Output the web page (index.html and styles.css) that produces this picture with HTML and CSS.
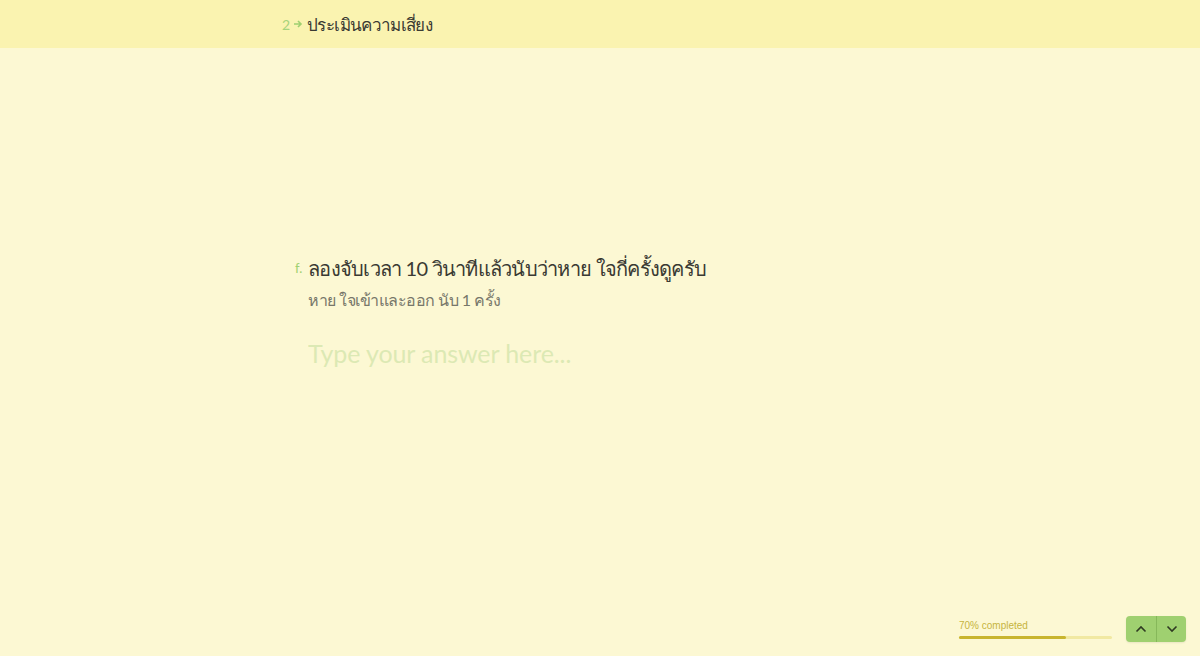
FILE: index.html
```html
<!DOCTYPE html>
<html>
<head>
    <title>ประเมินความเสี่ยง</title>
    <link rel="stylesheet" href="styles.css">
</head>
<body>
    <div class="header">
        <div class="header-inner">
            <span class="section-num">2</span>
            <span class="section-arrow">
                <svg width="10" height="10" viewBox="0 0 10 10">
                    <path d="M1 5 H8 M5 2 L8 5 L5 8" fill="none" stroke="#9fd070" stroke-width="1.6"/>
                </svg>
            </span>
            <span class="section-title">ประเมินความเสี่ยง</span>
        </div>
    </div>

    <div class="main">
        <div class="question">
            <div class="question-num">f.</div>
            <div class="question-body">
                <div class="question-title">ลองจับเวลา 10 วินาทีแล้วนับว่าหาย ใจกี่ครั้งดูครับ</div>
                <div class="question-desc">หาย ใจเข้าและออก นับ 1 ครั้ง</div>
                <input class="answer" type="text" placeholder="Type your answer here...">
            </div>
        </div>
    </div>

    <div class="footer">
        <div class="progress">
            <div class="progress-label">70% completed</div>
            <div class="progress-track">
                <div class="progress-fill" style="width: 70%"></div>
            </div>
        </div>
        <div class="nav-buttons">
            <button class="nav-btn">
                <svg width="12" height="8" viewBox="0 0 12 8">
                    <path d="M1.5 6.5 L6 2 L10.5 6.5" fill="none" stroke="#2f3a22" stroke-width="1.6"/>
                </svg>
            </button>
            <button class="nav-btn">
                <svg width="12" height="8" viewBox="0 0 12 8">
                    <path d="M1.5 1.5 L6 6 L10.5 1.5" fill="none" stroke="#2f3a22" stroke-width="1.6"/>
                </svg>
            </button>
        </div>
    </div>
</body>
</html>
```

FILE: styles.css
```css
* {
    box-sizing: border-box;
}

html, body {
    height: 100%;
}

body {
    margin: 0;
    background-color: #fcf8d3;
    font-family: Lato, "Noto Sans", "DejaVu Sans", sans-serif;
    color: #3a3a33;
    display: flex;
    flex-direction: column;
    overflow: hidden;
}

.header {
    height: 48px;
    background-color: #faf3b0;
    flex-shrink: 0;
}

.header-inner {
    display: flex;
    align-items: center;
    height: 100%;
    padding-left: 282px;
}

.section-num {
    font-size: 14px;
    color: #a6d47c;
}

.section-arrow {
    display: flex;
    margin-left: 3px;
    margin-right: 4px;
}

.section-title {
    font-size: 17px;
    letter-spacing: -0.65px;
    color: #3a3a33;
}

.main {
    flex: 1;
    padding-top: 204px;
}

.question {
    display: flex;
    padding-left: 295px;
}

.question-num {
    width: 13px;
    font-size: 13px;
    color: #9fd070;
    padding-top: 8px;
}

.question-title {
    font-size: 20px;
    letter-spacing: -0.75px;
    line-height: 32px;
    color: #3a3a33;
}

.question-desc {
    font-size: 16px;
    letter-spacing: -0.5px;
    line-height: 24px;
    color: #77776a;
    margin-top: 4px;
}

.answer {
    display: block;
    margin-top: 23px;
    width: 600px;
    border: none;
    background: transparent;
    outline: none;
    padding: 0;
    font-family: Lato, "Noto Sans", sans-serif;
    font-size: 25px;
    letter-spacing: -0.1px;
    line-height: 36px;
    color: #3a3a33;
}

.answer::placeholder {
    color: #dce9b4;
}

.footer {
    display: flex;
    justify-content: flex-end;
    align-items: flex-start;
    padding: 0 14px 14px 0;
    flex-shrink: 0;
}

.progress {
    width: 153px;
    margin-right: 14px;
    padding-top: 3px;
}

.progress-label {
    font-family: "Liberation Sans", Arial, sans-serif;
    font-size: 10px;
    line-height: 14px;
    color: #c6b43e;
}

.progress-track {
    height: 3px;
    margin-top: 3px;
    background-color: #f1e9a2;
    border-radius: 2px;
}

.progress-fill {
    height: 100%;
    background-color: #c8b52e;
    border-radius: 2px;
}

.nav-buttons {
    display: flex;
    background-color: #9fd070;
    border-radius: 4px;
    overflow: hidden;
    box-shadow: 0 1px 2px rgba(0, 0, 0, 0.08);
}

.nav-btn {
    width: 30px;
    height: 26px;
    border: none;
    background: transparent;
    padding: 0;
    display: flex;
    align-items: center;
    justify-content: center;
    cursor: pointer;
}

.nav-btn + .nav-btn {
    border-left: 1px solid #86b85a;
}
```
